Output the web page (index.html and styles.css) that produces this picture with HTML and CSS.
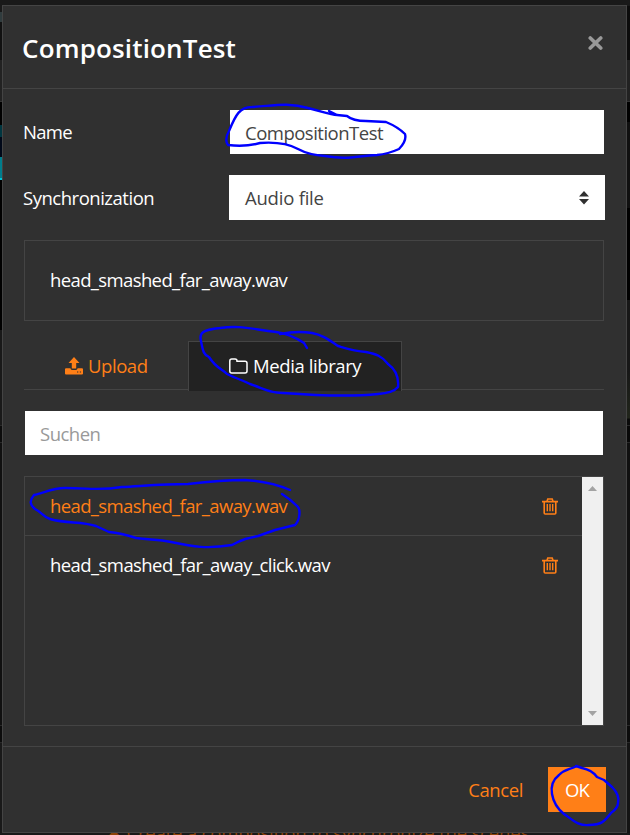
FILE: index.html
```html
<!DOCTYPE html>
<html lang="en">
<head>
<meta charset="utf-8">
<title>CompositionTest</title>
<link rel="stylesheet" href="styles.css">
</head>
<body>
<div class="backdrop"><p class="backdrop-text"><span class="backdrop-icon">✖</span> Create a composition to synchronize the scenes</p></div>
<div class="backdrop-edge"></div>
<main class="modal">
  <header class="modal-header">
    <h1 class="title"><span>CompositionTest</span></h1>
    <svg class="close" width="15" height="14" viewBox="0 0 15 14"><path d="M2.3 2 L12.7 12 M12.7 2 L2.3 12" stroke="#999" stroke-width="3.7" stroke-linecap="round"/></svg>
  </header>
  <section class="modal-body">
    <div class="row name-row">
      <label class="t-name">Name</label>
      <div class="field input"><span class="t-comp">CompositionTest</span></div>
    </div>
    <div class="row sync-row">
      <label class="t-sync">Synchronization</label>
      <div class="field select"><span class="t-audio">Audio file</span>
        <svg width="10" height="14" viewBox="0 0 10 14"><path d="M0 5.5 L5 0 L10 5.5Z M0 8 H10 L5 13.5Z" fill="#303030"/></svg>
      </div>
    </div>
    <div class="current"><span class="t-file">head_smashed_far_away.wav</span></div>
    <nav class="tabs">
      <div class="tab upload">
        <svg width="18" height="18" viewBox="0 0 18 18"><path d="M9 0 L14.5 6 H11.2 V11.5 H6.8 V6 H3.5Z" fill="currentColor"/><path d="M0 12.2 Q0 11.3 1 11.3 H5.4 Q5.8 13 7 13 H11 Q12.2 13 12.6 11.3 H17 Q18 11.3 18 12.2 V16.6 Q18 17.5 17 17.5 H1 Q0 17.5 0 16.6Z" fill="currentColor"/><path d="M12 15h1.3M14.8 15h1.3" stroke="#303030" stroke-width="1.2"/></svg>
        <span class="t-upload">Upload</span>
      </div>
      <div class="tab library">
        <svg width="19" height="16" viewBox="0 0 19 16"><path d="M.8 3 Q.8 1 2.8 1 H6 Q8 1 8 3 V3.3 H16 Q18 3.3 18 5.3 V13 Q18 15 16 15 H2.8 Q.8 15 .8 13Z" fill="none" stroke="#fff" stroke-width="1.5"/></svg>
        <span class="t-media">Media library</span>
      </div>
      <div class="tab-rest"></div>
    </nav>
    <div class="search"><span class="t-search">Suchen</span></div>
    <div class="list">
      <div class="items">
        <div class="item active"><span class="t-file">head_smashed_far_away.wav</span>
          <svg width="16" height="17" viewBox="0 0 16 17"><path d="M0 3.6H16M5 3.3 L5.8 1H10.2L11 3.3M2.2 3.6V15Q2.2 16 3.2 16H12.8Q13.8 16 13.8 15V3.6" fill="none" stroke="#ff7f17" stroke-width="1.6"/><path d="M5.3 6V13.3M8 6V13.3M10.7 6V13.3" stroke="#ff7f17" stroke-width="1.4"/></svg>
        </div>
        <div class="item"><span class="t-click">head_smashed_far_away_click.wav</span>
          <svg width="16" height="17" viewBox="0 0 16 17"><path d="M0 3.6H16M5 3.3 L5.8 1H10.2L11 3.3M2.2 3.6V15Q2.2 16 3.2 16H12.8Q13.8 16 13.8 15V3.6" fill="none" stroke="#ff7f17" stroke-width="1.6"/><path d="M5.3 6V13.3M8 6V13.3M10.7 6V13.3" stroke="#ff7f17" stroke-width="1.4"/></svg>
        </div>
      </div>
      <div class="scrollbar">
        <svg width="9" height="5" viewBox="0 0 9 5"><path d="M0 5L4.5 0L9 5Z" fill="#a3a3a3"/></svg>
        <svg width="9" height="5" viewBox="0 0 9 5"><path d="M0 0L4.5 5L9 0Z" fill="#a3a3a3"/></svg>
      </div>
    </div>
  </section>
  <footer class="modal-footer">
    <span class="cancel t-cancel">Cancel</span>
    <div class="ok"><span class="t-ok">OK</span></div>
  </footer>
</main>
<svg class="ink" width="630" height="835" viewBox="0 0 630 835">
  <path d="M329 111 L337 115 L347 116 Q353 121 366 121 L386 122 Q398 127 405 134 Q407 141 399 149 Q388 154 377 155 C356 156 348 160 325 156 Q309 155 298 149 C287 143 273 142 260 143 C246 147 236 146 228 145 Q224 140 229 131 C236 114 240 107 252 107 C272 106 288 102 308 108 C324 112 330 115 337 115"/>
  <path d="M307 348 L304 343 C292 335 284 333 276 332 C251 329 240 325 220 328 C202 330 199 333 201 341 C203 352 204 355 209 357 C216 368 222 369 227 374 C237 379 240 379 250 384 C265 389 270 393 283 393 C310 395 350 397 378 394 Q393 393 398 387 C399 377 395 369 388 364 C382 356 376 354 366 352 C354 351 345 348 338 346 C329 340 323 335 312 333 C300 331 290 332 280 334"/>
  <path d="M290 490 C276 484 264 481 245 480 C223 480 205 482 188 484 C163 484 142 486 122 487 C98 491 90 488 65 488 C52 488 44 493 34 495 Q27 503 35 509 C43 513 43 517 50 519 C68 524 80 521 96 526 L109 532 Q121 533 136 538 C150 540 158 539 171 542 C194 547 207 549 232 545 C243 539 248 538 258 536 L275 530 L295 525 C300 520 301 509 297 506 Q290 499 282 494"/>
  <path d="M576 766 L582 768 Q592 770 597 777 L604 780 L612 787 Q620 795 618 803 Q618 808 611 813 C604 822 601 825 589 825 C578 826 573 820 564 814 Q554 806 552 794 Q550 782 559 775 C565 769 569 770 577 766"/>
</svg>
</body>
</html>
```
FILE: styles.css
```css
* { box-sizing: border-box; }
body {
  margin: 0; width: 630px; height: 835px; overflow: hidden; position: relative;
  font: 18.5px/24px "Open Sans", "Noto Sans", sans-serif; color: #fff; background: #181818;
}
body::before { content: ""; display: table; }
svg { display: block; flex: none; }
span, label { white-space: nowrap; }
.backdrop {
  position: absolute; inset: 0;
  background: linear-gradient(#191919 0 12px, #303c3e 12px 22px, #111 22px 60px, #222 60px 101px, #333 101px 102px, #000 102px 125px, #003640 125px 137px, #000818 137px 157px, #007d8c 157px 178px, #00c4d8 178px 180px, #000 180px 330px, #191919 330px 425px, #292929 425px 426px, #0c0c0c 426px 442px, #292929 442px 443px, #101010 443px 725px, #292929 725px 726px, #0c0c0c 726px 742px, #292929 742px 743px, #191919 743px);
}
.backdrop-edge {
  position: absolute; top: 0; right: 0; width: 4px; height: 833px;
  background: linear-gradient(#191919 0 6px, #0b0b0b 6px 60px, #222 60px 101px, #333 101px 102px, #000 102px 122px, #101010 122px 208px, #000 208px 300px, #171717 300px 370px, #21251b 418px, #0a0a0a 419px 425px, #292929 425px 426px, #080808 426px 442px, #292929 442px 443px, #101010 443px 725px, #292929 725px 726px, #0c0c0c 726px 742px, #292929 742px 743px, #141414 743px);
}
.backdrop-text { position: absolute; left: 106px; top: 821px; margin: 0; white-space: nowrap; color: #8c4208; letter-spacing: -.18px; }
.modal {
  position: relative; margin: 5px 3px 0 2px; width: 625px; height: 828px;
  display: flex; flex-direction: column; background: #303030; border: 1px solid #444;
}
.modal-header { height: 83px; padding: 0 23px 0 19px; border-bottom: 1px solid #444; display: flex; justify-content: space-between; }
.title { margin: 24px 0 0; font-size: 26px; line-height: 36px; font-weight: 600; letter-spacing: .16px; }
.close { margin-top: 30px; }
.modal-body { height: 657px; padding: 21px 22px 0 21px; }
.row { display: flex; align-items: center; justify-content: space-between; margin-left: -1px; }
.field { background: #fff; color: #444; display: flex; align-items: center; justify-content: space-between; }
.input { width: 374px; height: 44px; padding: 2px 16px 0 15px; }
.select { width: 376px; height: 45px; padding: 1px 16px 0 16px; margin-right: -1px; }
.sync-row { margin-top: 21px; }
.current { margin-top: 20px; height: 81px; border: 1px solid #444; padding: 0 25px 2px; display: flex; align-items: center; }
.tabs { display: flex; margin-top: 20px; height: 50px; }
.tab { display: flex; align-items: center; gap: 5px; }
.upload { width: 164px; height: 49px; padding: 2px 0 0 41px; color: #ff7f17; border-bottom: 1px solid #444; }
.library { width: 214px; height: 50px; padding: 0 0 1px 40px; background: #222; border: 1px solid #444; border-bottom: 0; }
.tab-rest { flex: 1; height: 49px; border-bottom: 1px solid #444; }
.search { height: 44px; margin: 20px 1px 0; padding: 2px 15px 0; background: #fff; color: #999; display: flex; align-items: center; }
.list { margin-top: 21px; height: 250px; border: 1px solid #444; display: flex; }
.items { flex: 1; }
.item { height: 59px; padding: 0 24px 0 25px; display: flex; align-items: center; justify-content: space-between; }
.item span { margin-bottom: 1px; }
.active { color: #ff7f17; border-bottom: 1px solid #444; }
.scrollbar { width: 21px; background: #f0f0f0; padding: 9px 0; display: flex; flex-direction: column; align-items: center; justify-content: space-between; }
.modal-footer { flex: 1; border-top: 1px solid #444; padding: 20px 20px 0 0; display: flex; justify-content: flex-end; }
.cancel { color: #ff7f17; line-height: 45px; margin-right: 25px; }
.ok { width: 58px; height: 45px; background: #ff7f17; display: flex; align-items: center; justify-content: center; }
.ink { position: absolute; left: 0; top: 0; fill: none; stroke: #00f; stroke-width: 2.4; stroke-linejoin: round; stroke-linecap: round; }
.t-name { letter-spacing: -.7px; }
.t-sync { letter-spacing: -.48px; }
.t-comp { letter-spacing: -.5px; }
.t-audio { letter-spacing: -.22px; }
.t-file { letter-spacing: -.62px; }
.t-click { letter-spacing: -.57px; }
.t-upload { letter-spacing: -.45px; }
.t-media { letter-spacing: -.4px; }
.t-search { letter-spacing: -.5px; }
.t-cancel { letter-spacing: -.4px; }
.t-ok { letter-spacing: -.8px; }
```
